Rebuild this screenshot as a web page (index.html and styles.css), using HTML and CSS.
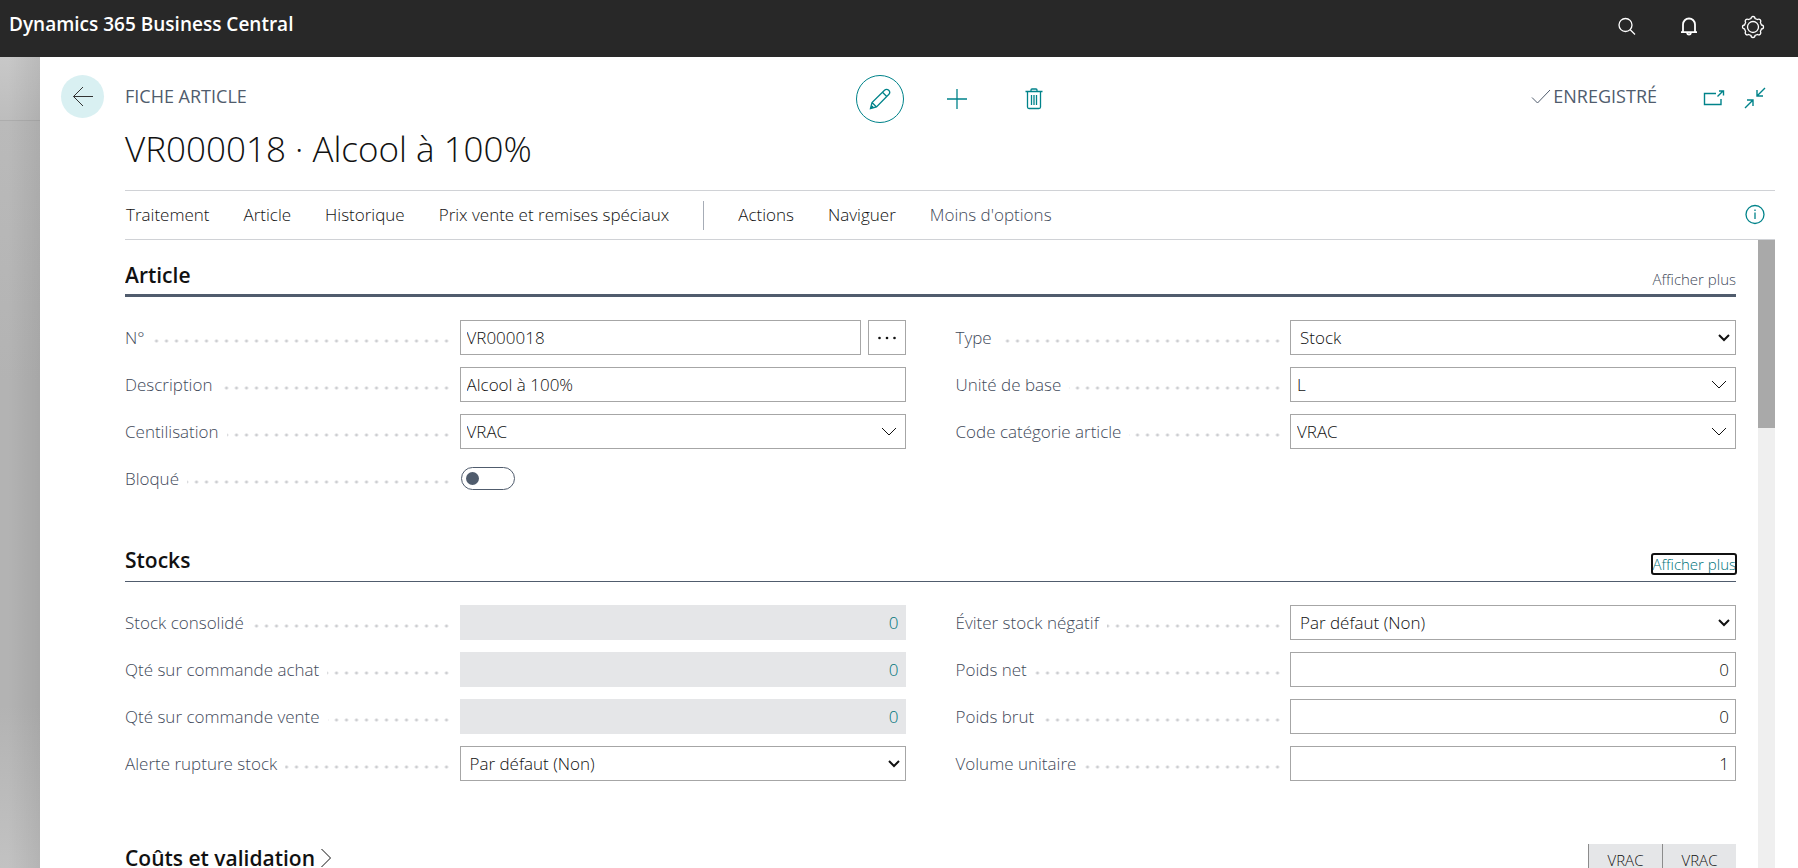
FILE: index.html
```html
<!DOCTYPE html>
<html lang="fr">
<head>
<meta charset="utf-8">
<title>VR000018 · Alcool à 100%</title>
<link rel="stylesheet" href="styles.css">
</head>
<body>
<header class="topbar">
  <span class="brand">Dynamics 365 Business Central</span>
  <div class="topbar-actions">
    <button class="icon-btn" aria-label="Rechercher"><svg width="20" height="20" viewBox="0 0 20 20"><circle cx="8.500" cy="8" r="6.500"/><path d="M13 12.500l5 5"/></svg></button>
    <button class="icon-btn bell" aria-label="Notifications"><svg width="20" height="20" viewBox="0 0 20 20"><path d="M4 15V7.500a6 6 0 0 1 12 0V15M2 15.200h16M8 16c.5 2 3.500 2 4 0"/></svg></button>
    <button class="icon-btn" aria-label="Paramètres"><svg width="24" height="24" viewBox="0 0 24 24"><circle cx="12" cy="12" r="5.500"/><path d="M10 3.500a2 2 0 0 1 4 0l2.600 1.100a2 2 0 0 1 2.800 2.800l1.100 2.600a2 2 0 0 1 0 4l-1.100 2.600a2 2 0 0 1-2.800 2.800L14 20.500a2 2 0 0 1-4 0l-2.600-1.100a2 2 0 0 1-2.800-2.800L3.500 14a2 2 0 0 1 0-4l1.100-2.600a2 2 0 0 1 2.800-2.800z"/></svg></button>
  </div>
</header>
<div class="stage">
  <div class="backdrop"></div>
  <main class="card">
    <div class="card-head">
      <button class="back" aria-label="Retour"><svg width="22" height="22" viewBox="0 0 22 22"><path d="M21 10.500H1.500M11 1L1.500 10.500l9.500 9.500"/></svg></button>
      <span class="caption">FICHE ARTICLE</span>
      <div class="tools">
        <button class="tool edit" aria-label="Modifier"><svg width="22" height="22" viewBox="0 0 22 22"><path d="M1.500 20.500l1.500-6L15.500 2.300a2.900 2.900 0 0 1 4.200 4.200L7.500 19zM3 14.500L7.500 19M13.500 4.300l4.200 4.200M1.500 20.500l2.500-2.500"/></svg></button>
        <button class="tool" aria-label="Nouveau"><svg width="22" height="22" viewBox="0 0 22 22"><path d="M11 1v20M1 11h20"/></svg></button>
        <button class="tool" aria-label="Supprimer"><svg width="22" height="22" viewBox="0 0 22 22"><path d="M2.500 3.500h17M4.500 3.500v15.500a1.500 1.500 0 0 0 1.500 1.500h10a1.500 1.500 0 0 0 1.500-1.500v-15.500M8 3.500V2a1 1 0 0 1 1-1h4a1 1 0 0 1 1 1V3.500M8.500 7v10M11 7v10M13.500 7v10"/></svg></button>
      </div>
      <div class="status">
        <span class="saved"><svg width="20" height="20" viewBox="0 0 20 20"><path d="M1 11.500l5.500 5.500L19 4"/></svg>ENREGISTRÉ</span>
        <button class="mini" aria-label="Ouvrir dans une nouvelle fenêtre"><svg width="22" height="22" viewBox="0 0 22 22"><path d="M13 6.500H1.500v11h16.500V12M14.500 9.500l5.500-5.500M16 4h4.500v4.500"/></svg></button>
        <button class="mini" aria-label="Réduire"><svg width="22" height="22" viewBox="0 0 22 22"><path d="M21 1l-8 8M13 3v6h6M1 21l8-8M3 13h6v6"/></svg></button>
      </div>
    </div>
    <h1 class="title">VR000018 · Alcool à 100%</h1>
    <nav class="menu">
      <button>Traitement</button><button>Article</button><button>Historique</button><button>Prix vente et remises spéciaux</button>
      <span class="divider"></span>
      <button>Actions</button><button>Naviguer</button><button class="muted">Moins d'options</button>
      <button class="info" aria-label="Informations"><svg width="22" height="22" viewBox="0 0 22 22"><circle cx="11" cy="10.500" r="9"/><path d="M11 8.500v6.500M11 5.500v1.500"/></svg></button>
    </nav>
    <div class="scroller">
      <div class="content">
        <section>
          <div class="section-head strong"><h2>Article</h2><a href="#">Afficher plus</a></div>
          <div class="fields">
            <div class="column">
              <div class="field"><div class="label"><label for="no">N°</label></div><div class="split"><input id="no" value="VR000018"><button class="more" aria-label="Choisir le N°"><svg width="20" height="6" viewBox="0 0 20 6"><circle cx="2.500" cy="3" r="1.300"/><circle cx="10" cy="3" r="1.300"/><circle cx="17.500" cy="3" r="1.300"/></svg></button></div></div>
              <div class="field"><div class="label"><label for="desc">Description</label></div><input id="desc" value="Alcool à 100%"></div>
              <div class="field"><div class="label"><label for="cent">Centilisation</label></div><div class="lookup"><input id="cent" value="VRAC"><button aria-label="Choisir la centilisation"><svg width="16" height="10" viewBox="0 0 16 10"><path d="M1 1l7 7 7-7"/></svg></button></div></div>
              <div class="field"><div class="label"><label for="bloque">Bloqué</label></div><input id="bloque" class="toggle" type="checkbox" role="switch"></div>
            </div>
            <div class="column">
              <div class="field"><div class="label"><label for="type">Type</label></div><div class="choice"><select id="type"><option>Stock</option></select><svg width="12" height="8" viewBox="0 0 12 8"><path d="M1 1l5 5 5-5"/></svg></div></div>
              <div class="field"><div class="label"><label for="unite">Unité de base</label></div><div class="lookup"><input id="unite" value="L"><button aria-label="Choisir l'unité"><svg width="16" height="10" viewBox="0 0 16 10"><path d="M1 1l7 7 7-7"/></svg></button></div></div>
              <div class="field"><div class="label"><label for="cat">Code catégorie article</label></div><div class="lookup"><input id="cat" value="VRAC"><button aria-label="Choisir la catégorie"><svg width="16" height="10" viewBox="0 0 16 10"><path d="M1 1l7 7 7-7"/></svg></button></div></div>
            </div>
          </div>
        </section>
        <section>
          <div class="section-head"><h2>Stocks</h2><a href="#" class="focused">Afficher plus</a></div>
          <div class="fields">
            <div class="column">
              <div class="field"><div class="label"><label for="conso">Stock consolidé</label></div><input id="conso" class="num locked" value="0" readonly></div>
              <div class="field"><div class="label"><label for="achat">Qté sur commande achat</label></div><input id="achat" class="num locked" value="0" readonly></div>
              <div class="field"><div class="label"><label for="vente">Qté sur commande vente</label></div><input id="vente" class="num locked" value="0" readonly></div>
              <div class="field"><div class="label"><label for="alerte">Alerte rupture stock</label></div><div class="choice"><select id="alerte"><option>Par défaut (Non)</option></select><svg width="12" height="8" viewBox="0 0 12 8"><path d="M1 1l5 5 5-5"/></svg></div></div>
            </div>
            <div class="column">
              <div class="field"><div class="label"><label for="neg">Éviter stock négatif</label></div><div class="choice"><select id="neg"><option>Par défaut (Non)</option></select><svg width="12" height="8" viewBox="0 0 12 8"><path d="M1 1l5 5 5-5"/></svg></div></div>
              <div class="field"><div class="label"><label for="net">Poids net</label></div><input id="net" class="num" value="0"></div>
              <div class="field"><div class="label"><label for="brut">Poids brut</label></div><input id="brut" class="num" value="0"></div>
              <div class="field"><div class="label"><label for="vol">Volume unitaire</label></div><input id="vol" class="num" value="1"></div>
            </div>
          </div>
        </section>
        <section class="collapsed">
          <h2>Coûts et validation<svg width="12" height="20" viewBox="0 0 12 20"><path d="M1.500 1l9 9-9 9"/></svg></h2>
          <div class="chips"><span>VRAC</span><span>VRAC</span></div>
        </section>
      </div>
      <div class="scrollbar"><div class="thumb"></div></div>
    </div>
  </main>
</div>
</body>
</html>
```
FILE: styles.css
```css
* { box-sizing: border-box; }
body {
  margin: 0;
  height: 100vh;
  overflow: hidden;
  display: flex;
  flex-direction: column;
  font: 300 17px/24px "Open Sans", "Noto Sans", sans-serif;
  color: #111;
  background: #fff;
}
button, input, select { font: inherit; color: inherit; margin: 0; border-radius: 0; }
button { background: none; border: 0; padding: 0; }
svg { fill: none; stroke: currentColor; display: block; flex: none; }
h1, h2 { margin: 0; }
a { text-decoration: none; }

.topbar {
  flex: none;
  height: 57px;
  padding: 0 33px 10px 9px;
  display: flex;
  align-items: center;
  justify-content: space-between;
  background: #282828;
  color: #fff;
}
.brand { font-size: 19px; font-weight: 600; }
.topbar-actions { display: flex; align-items: center; gap: 42px; padding-top: 6px; }
.topbar-actions svg { stroke-width: 1.3; }
.bell svg { stroke-width: 1.8; }

.stage { flex: 1; min-height: 0; display: flex; }
.backdrop {
  flex: none;
  width: 40px;
  background:
    linear-gradient(90deg, rgba(0,0,0,0) 20%, rgba(0,0,0,.07)),
    linear-gradient(#c8c8c8 0, #bdbdbd 63px, #adadad 63px, #adadad 64px, #bababa 64px, #b3b3b3 40%, #b3b3b3 80%, #c2c2c2);
}
.card { flex: 1; min-width: 0; display: flex; flex-direction: column; padding: 18px 23px 0 85px; }

.card-head {
  display: grid;
  grid-template-columns: 1fr auto 1fr;
  align-items: center;
  height: 48px;
  position: relative;
  color: #505c6d;
  font-size: 18px;
  font-weight: 400;
}
.back {
  position: absolute;
  left: -64px;
  top: 0;
  width: 43px;
  height: 43px;
  border-radius: 50%;
  background: #d9f0f2;
  color: #333;
  display: grid;
  place-items: center;
}
.caption { padding-bottom: 6px; }
.tools { display: flex; align-items: center; gap: 29px; padding-left: 14px; color: #00838a; }
.tool { width: 48px; height: 48px; display: grid; place-items: center; }
.tool svg { stroke-width: 1.3; }
.edit { border: 1px solid #00838a; border-radius: 50%; }
.status { display: flex; align-items: center; justify-content: flex-end; gap: 19px; padding: 0 9px 2px 0; }
.saved { display: flex; align-items: center; gap: 2px; margin-right: 27px; padding-bottom: 4px; }
.mini { color: #00838a; }
.mini svg { stroke-width: 1.4; }

.title { font-size: 35px; line-height: 48px; font-weight: 300; padding: 2px 0 17px; }

.menu {
  flex: none;
  height: 50px;
  display: flex;
  align-items: center;
  gap: 34px;
  border-top: 1px solid #d0d2d6;
  border-bottom: 1px solid #d0d2d6;
  padding: 0 9px 0 1px;
}
.divider { width: 1px; height: 29px; background: #a6acb6; }
.muted { color: #3f4a5a; }
.info { margin-left: auto; color: #00838a; }
.info svg { stroke-width: 1.3; }

.scroller { flex: 1; min-height: 0; display: flex; gap: 22px; overflow: hidden; }
.content { flex: 1; min-width: 0; }
.scrollbar { flex: none; width: 17px; background: #efefef; }
.thumb { height: 30%; background: #a9a9a9; }

.section-head {
  display: flex;
  justify-content: space-between;
  align-items: flex-end;
  height: 57px;
  padding-bottom: 5px;
  border-bottom: 1px solid #505c6d;
}
.strong { border-bottom-width: 3px; padding-bottom: 3px; }
h2 { font-size: 21px; line-height: 32px; font-weight: 600; }
.section-head a { font-size: 15px; line-height: 20px; color: #3f4a5a; margin-bottom: 2px; }
.section-head .focused { color: #00737a; outline: 2px solid #111; outline-offset: -1px; border-radius: 2px; }

.fields { display: grid; grid-template-columns: 1fr 1fr; gap: 50px; padding: 23px 0 29px; align-items: start; }
.column { display: grid; gap: 12px; }
.field { display: grid; grid-template-columns: 3fr 4fr; align-items: center; height: 35px; }
.label {
  display: flex;
  margin-right: 8px;
  color: #3f4a5a;
  background: radial-gradient(circle at 5px 5px, #cccdd0 1px, transparent 2px) right 10px / 10px 10px repeat-x;
}
.label label { background: #fff; padding-right: 8px; }
.field input:not(.toggle), select {
  width: 100%;
  height: 35px;
  border: 1px solid #a6a6a6;
  background: #fff;
  padding: 0 6px;
  outline: 0;
}
select { appearance: none; padding: 0 9px; display: block; }
.split { display: flex; gap: 7px; }
.split input { flex: 1; min-width: 0; }
.more { width: 38px; border: 1px solid #a6a6a6; display: grid; place-items: center; }
.more svg { fill: currentColor; stroke: none; }
.lookup, .choice { position: relative; }
.lookup button { position: absolute; right: 9px; top: 13px; }
.choice svg { position: absolute; right: 6px; top: 14px; stroke-width: 2; pointer-events: none; }
.field .num { text-align: right; }
.field input.locked:read-only { background: #e5e6e8; border-color: #e5e6e8; color: #00737a; }
.toggle {
  appearance: none;
  width: 54px;
  height: 23px;
  border: 1px solid #505c6d;
  border-radius: 12px;
  margin-left: 1px;
  padding: 4px;
}
.toggle::before { content: ""; display: block; width: 13px; height: 13px; border-radius: 50%; background: #505c6d; }

.collapsed { display: flex; justify-content: space-between; align-items: flex-start; padding-top: 32px; }
.collapsed h2 { display: flex; align-items: center; gap: 5px; }
.chips { display: flex; padding-top: 2px; }
.chips span {
  width: 74px;
  height: 48px;
  border-left: 1px solid #8c8c8c;
  background: #e5e6e8;
  font-size: 15px;
  line-height: 32px;
  text-align: center;
}
```
